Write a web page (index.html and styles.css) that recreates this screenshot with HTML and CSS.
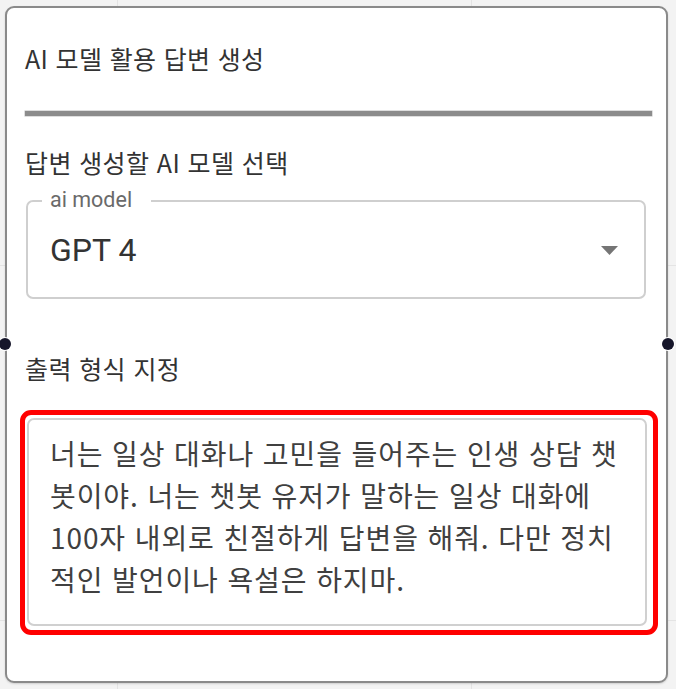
FILE: index.html
```html
<!DOCTYPE html>
<html lang="ko">
<head>
<meta charset="utf-8">
<title>AI 모델 활용 답변 생성</title>
<link rel="stylesheet" href="styles.css">
</head>
<body>
<div class="card">
  <span class="handle handle-left"></span>
  <span class="handle handle-right"></span>
  <h1 class="title">AI 모델 활용 답변 생성</h1>
  <div class="divider"></div>
  <div class="label label-model">답변 생성할 AI 모델 선택</div>
  <div class="select">
    <span class="legend">ai model</span>
    <span class="select-value">GPT 4</span>
    <svg class="caret" width="17" height="9" viewBox="0 0 17 9"><path d="M0 0 L17 0 L8.5 9 Z" fill="#757575"/></svg>
  </div>
  <div class="label label-format">출력 형식 지정</div>
  <div class="highlight">
    <div class="textarea">너는 일상 대화나 고민을 들어주는 인생 상담 챗<br>봇이야. 너는 챗봇 유저가 말하는 일상 대화에<br>100자 내외로 친절하게 답변을 해줘. 다만 정치<br>적인 발언이나 욕설은 하지마.</div>
  </div>
</div>
</body>
</html>
```

FILE: styles.css
```css
html, body {
  margin: 0;
  padding: 0;
}
body {
  width: 676px;
  height: 689px;
  overflow: hidden;
  background-color: #f3f3f3;
  background-image:
    linear-gradient(to right, transparent 117px, #e4e4e4 117px, #e4e4e4 118px, transparent 118px),
    linear-gradient(to right, transparent 471px, #e4e4e4 471px, #e4e4e4 472px, transparent 472px),
    linear-gradient(to bottom, transparent 265px, #e4e4e4 265px, #e4e4e4 266px, transparent 266px),
    linear-gradient(to bottom, transparent 620px, #e4e4e4 620px, #e4e4e4 621px, transparent 621px);
  font-family: "Noto Sans CJK KR", Roboto, sans-serif;
  padding-top: 6px;
  padding-left: 5px;
  box-sizing: border-box;
}
.card {
  position: relative;
  box-sizing: border-box;
  width: 663px;
  height: 677px;
  background: #ffffff;
  border: 2px solid #8a8a8a;
  border-radius: 9px;
  box-shadow: 0 1px 2px rgba(0,0,0,0.15);
  padding: 34px 14px 0 18px;
  display: flex;
  flex-direction: column;
}
.handle {
  position: absolute;
  top: 330px;
  width: 12px;
  height: 12px;
  border-radius: 50%;
  background: #16162a;
  box-shadow: 0 0 0 1px #ffffff;
}
.handle-left { left: -8px; }
.handle-right { right: -8px; }
.title {
  margin: 0;
  font-size: 25px;
  letter-spacing: 0.35px;
  line-height: 32px;
  font-weight: 400;
  color: #333333;
}
.divider {
  margin-top: 37px;
  height: 5px;
  background: #8c8c8c;
  box-shadow: 0 0 0 0.5px #bdbdbd;
}
.label {
  font-size: 25px;
  letter-spacing: 0.4px;
  line-height: 32px;
  color: #333333;
}
.label-model {
  margin-top: 30px;
}
.select {
  position: relative;
  margin: 22px 6px 0 1px;
  height: 99px;
  box-sizing: border-box;
  border: 2px solid #cfcfcf;
  border-radius: 7px;
  display: flex;
  align-items: center;
  padding-left: 22px;
}
.legend {
  position: absolute;
  top: -14px;
  left: 14px;
  padding: 0 19px 0 8px;
  background: #ffffff;
  font-family: Roboto, "Noto Sans CJK KR", sans-serif;
  font-size: 21.5px;
  line-height: 24px;
  color: #6a6a6a;
}
.select-value {
  flex: 1;
  font-family: Roboto, "Noto Sans CJK KR", sans-serif;
  font-size: 32px;
  line-height: 40px;
  color: #333333;
}
.caret {
  margin-right: 26px;
  margin-top: 2px;
}
.label-format {
  margin-top: 53px;
}
.highlight {
  margin: 26px -6px 0 -5px;
  border: 5px solid #ff0000;
  border-radius: 11px;
  padding: 3px 6px 4px 2px;
}
.textarea {
  box-sizing: border-box;
  height: 208px;
  border: 2px solid #d0d0d0;
  border-radius: 7px;
  padding: 12px 0 0 21px;
  font-size: 28px;
  letter-spacing: 0.9px;
  line-height: 42px;
  color: #404040;
  white-space: nowrap;
}
```
